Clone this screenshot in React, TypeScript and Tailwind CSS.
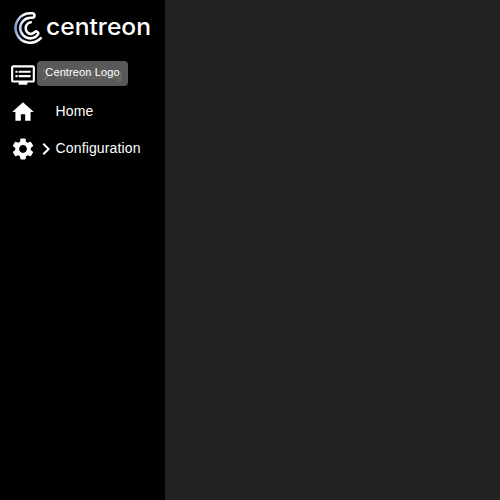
import React from "react";
import { MdDvr, MdHome, MdSettings, MdNavigateNext } from "react-icons/md";

function Logo() {
  return (
    <svg width="165" height="56" viewBox="0 0 165 56" fill="none" role="img" aria-label="Centreon">
      <defs>
        <linearGradient id="shade" x1="13" y1="0" x2="29" y2="0" gradientUnits="userSpaceOnUse">
          <stop offset="0" stopColor="#6584b8" />
          <stop offset="0.35" stopColor="#b0c5e8" />
          <stop offset="0.8" stopColor="#ffffff" />
        </linearGradient>
      </defs>
      <g stroke="url(#shade)" strokeWidth="2.6" strokeLinecap="round" strokeLinejoin="round">
        <path d="M40.8 38.2A14.7 14.7 0 1 1 29.8 13.3H32.2C35.2 13.3 35.2 17.8 32.2 17.8H30.5A10.3 10.3 0 0 0 30.5 38.4C34 38.4 36.2 36.8 37.8 34.6C39.2 32.2 36 30.2 34.6 32.2C33.6 33.4 32.3 34.1 30.5 34.1A6 6 0 0 1 30.8 22.3" />
      </g>
      <text x="46" y="34.5" fill="#fff" fontSize="23.5" fontWeight="500" textLength="105" lengthAdjust="spacingAndGlyphs" className="font-[Inter,sans-serif]">centreon</text>
    </svg>
  );
}

function Item({ icon, label, arrow }: { icon: React.ReactNode; label: string; arrow?: boolean }) {
  return (
    <li className="flex h-[37px] items-center pl-[10px] text-white">
      <span className="w-[26px] text-[26px]">{icon}</span>
      <span className="flex w-[19.5px] justify-center text-[24px]">{arrow && <MdNavigateNext className="shrink-0" />}</span>
      <span className="pb-[2px] text-sm tracking-[0.15px]">{label}</span>
    </li>
  );
}

export default function App() {
  return (
    <div className="flex h-[500px] w-[500px] overflow-hidden bg-[#222222] font-['Liberation_Sans',Arial,sans-serif]">
      <aside className="relative w-[165px] bg-black">
        <Logo />
        <ul>
          <Item icon={<MdDvr />} label="Monitoring" arrow />
          <Item icon={<MdHome />} label="Home" />
          <Item icon={<MdSettings />} label="Configuration" arrow />
        </ul>
        <div role="tooltip" className="absolute left-[37px] top-[61px] flex h-[25px] w-[91px] items-center justify-center rounded bg-[#616161]/92 pb-[2px] text-[11px] tracking-[0.12px] text-white">
          Centreon Logo
        </div>
      </aside>
      <main className="flex-1" />
    </div>
  );
}
